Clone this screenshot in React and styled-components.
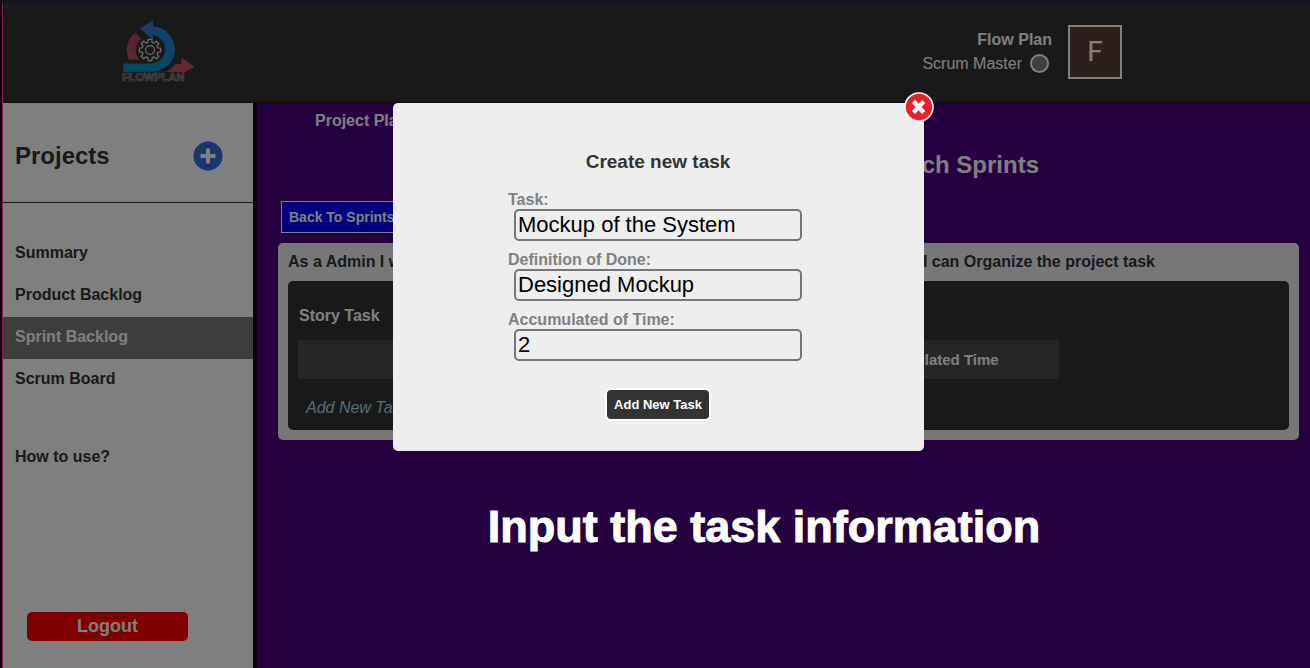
import React from "react";
import styled, { createGlobalStyle, css } from "styled-components";

const GlobalStyle = createGlobalStyle`
  *, *::before, *::after { box-sizing: border-box; }
  body {
    margin: 0;
    background: #14141f;
    font-family: "Liberation Sans", Arial, sans-serif;
    font-size: 16px;
    line-height: 20px;
    color: #333;
  }
  h1, h2, h3, p, ul { margin: 0; padding: 0; }
  button, input { font-family: inherit; }
`;

const Shell = styled.div`
  display: flex;
  min-height: 100vh;
  border-top: 3px solid #14141f;
  border-left: 2px solid #08080f;
`;

const Page = styled.div`
  position: relative;
  flex: 1;
  display: flex;
  flex-direction: column;
  border-left: 1px solid #8c1f50;
  background: #4b0082;
`;

const Header = styled.header`
  display: flex;
  justify-content: space-between;
  align-items: center;
  height: 100px;
  padding: 0 188px 2px 118px;
  background: #333;
  border-bottom: 1px solid #181818;
`;

const Account = styled.div`
  display: flex;
  align-items: center;
  gap: 16px;
  color: #fff;
`;

const AccountText = styled.div`
  display: flex;
  flex-direction: column;
  align-items: flex-end;
  gap: 4px;
`;

const AccountName = styled.strong`
  font-weight: 700;
`;

const Role = styled.span`
  display: flex;
  align-items: center;
  gap: 8px;
  padding-right: 3px;
`;

const StatusDot = styled.span`
  width: 19px;
  height: 19px;
  border: 2px solid #fff;
  border-radius: 50%;
  background: #808080;
`;

const Avatar = styled.div`
  display: grid;
  place-items: center;
  width: 54px;
  height: 54px;
  border: 2px solid #fff;
  background: #5d4037;
  font-size: 28px;
  line-height: 32px;
  font-family: Roboto, "Liberation Sans", sans-serif;
`;

const Body = styled.div`
  flex: 1;
  display: flex;
`;

const Sidebar = styled.aside`
  display: flex;
  flex-direction: column;
  flex: 0 0 254px;
  border-right: 4px solid #16001f;
  background: #fff;
`;

const SidebarHead = styled.div`
  display: flex;
  align-items: center;
  justify-content: space-between;
  height: 100px;
  padding: 6px 30px 0 12px;
  border-bottom: 1px solid #333;
`;

const SidebarTitle = styled.h2`
  font-size: 24px;
  line-height: 28px;
`;

const AddProject = styled.button`
  display: block;
  width: 30px;
  height: 30px;
  padding: 0;
  border: 0;
  background: none;
`;

const NavList = styled.ul`
  list-style: none;
  padding-top: 30px;
`;

const NavLink = styled.a`
  display: flex;
  align-items: center;
  height: 42px;
  padding: 0 12px 2px;
  font-weight: 700;
  text-decoration: none;
  color: #333;
  ${({ $active }) => $active && css`
    background: #7a7a7a;
    color: #fff;
  `}
  ${({ $spaced }) => $spaced && css`
    margin-top: 36px;
  `}
`;

const Logout = styled.button`
  width: 161px;
  height: 29px;
  margin: auto 0 27px 24px;
  padding: 0;
  border: 0;
  border-radius: 5px;
  background: #f00;
  color: #fff;
  font-size: 18px;
  font-weight: 700;
`;

const Main = styled.main`
  flex: 1;
  min-width: 0;
  padding: 8px 11px 0 21px;
`;

const Crumb = styled.a`
  display: block;
  margin-left: 37px;
  color: #fff;
  font-weight: 700;
  text-decoration: none;
`;

const MainTitle = styled.h1`
  padding: 19px 260px 21px 0;
  color: #fff;
  font-size: 24px;
  line-height: 30px;
  text-align: right;
`;

const BackButton = styled.button`
  display: block;
  height: 32px;
  margin: 0 0 10px 3px;
  padding: 0 7px;
  border: 1px solid #fff;
  background: #00f;
  color: #fff;
  font-size: 14px;
  font-weight: 700;
`;

const StoryCard = styled.section`
  padding: 9px 10px 10px;
  border-radius: 5px;
  background: #eee;
`;

const StoryTitle = styled.h3`
  display: flex;
  justify-content: space-between;
  padding: 0 134px 9px 0;
  font-size: 16px;
  line-height: 20px;
`;

const TaskPanel = styled.div`
  height: 149px;
  padding: 25px 10px 0;
  border-radius: 5px;
  background: #333;
  color: #fff;
`;

const PanelTitle = styled.h3`
  padding: 0 0 14px 1px;
  font-size: 16px;
  line-height: 20px;
`;

const TaskTable = styled.table`
  width: 761px;
  height: 39px;
  table-layout: fixed;
  border-collapse: collapse;
  background: #4d4d4d;
  font-size: 15px;
`;

const AddLink = styled.a`
  display: inline-block;
  margin: 19px 0 0 8px;
  color: #add8e6;
  font-style: italic;
  text-decoration: none;
`;

const Overlay = styled.div`
  position: absolute;
  inset: 0;
  display: flex;
  flex-direction: column;
  align-items: center;
  padding: 100px 0 0 3px;
  background: rgba(0, 0, 0, 0.5);
`;

const Modal = styled.form`
  position: relative;
  display: flex;
  flex-direction: column;
  align-items: center;
  width: 531px;
  padding: 48px 0 30px;
  border-radius: 5px;
  background: #eee;
`;

const CloseButton = styled.button`
  position: absolute;
  top: -11px;
  right: -10px;
  width: 30px;
  height: 30px;
  padding: 0;
  border: 0;
  background: none;
`;

const ModalTitle = styled.h2`
  padding-bottom: 17px;
  font-size: 19px;
  line-height: 22px;
`;

const Fields = styled.div`
  display: flex;
  flex-direction: column;
  gap: 9px;
  width: 300px;
`;

const Field = styled.div`
  display: flex;
  flex-direction: column;
`;

const Label = styled.label`
  color: #808080;
  font-weight: 700;
  line-height: 19px;
`;

const TextInput = styled.input`
  height: 32px;
  margin: 0 6px;
  padding: 0 2px;
  border: 2px solid #767676;
  border-radius: 5px;
  background: transparent;
  color: #000;
  font-size: 22px;
`;

const SubmitButton = styled.button`
  height: 33px;
  margin-top: 27px;
  padding: 0 7px;
  border: 2px solid #fff;
  border-radius: 6px;
  background: #333;
  color: #fff;
  font-size: 13px;
  font-weight: 700;
`;

const Caption = styled.p`
  margin-top: 50px;
  padding-left: 212px;
  color: #fff;
  font-size: 45px;
  font-weight: 700;
  line-height: 52px;
  -webkit-text-stroke: 1px #fff;
  stroke-linejoin: round;
`;

const gearPath = (() => {
  const teeth = 8;
  const step = (Math.PI * 2) / teeth;
  const points = [];
  for (let i = 0; i < teeth; i += 1) {
    const a = i * step;
    [[-0.27, 8], [-0.17, 10.8], [0.17, 10.8], [0.27, 8]].forEach(([d, r]) => {
      points.push(`${(29 + r * Math.cos(a + d)).toFixed(2)} ${(31 + r * Math.sin(a + d)).toFixed(2)}`);
    });
  }
  return `M${points.join("L")}Z`;
})();

function Logo() {
  return (
    <svg width="76" height="66" viewBox="0 0 76 66" role="img" aria-label="FlowPlan">
      <defs>
        <linearGradient id="flow" x1="0" y1="0" x2="0" y2="1">
          <stop offset="0" stopColor="#3478dc" />
          <stop offset="1" stopColor="#0892c4" />
        </linearGradient>
        <linearGradient id="arc" x1="1" y1="0" x2="0" y2="1">
          <stop offset="0" stopColor="#a44070" />
          <stop offset="1" stopColor="#c05460" />
        </linearGradient>
      </defs>
      <path d="M14 13.5A23 23 0 0 0 8 40.5H18A14.5 14.5 0 0 1 20.5 19.5Z" fill="url(#arc)" />
      <path d="M44 53Q51 50 54 45H60.5V38.5L73.5 48L61 54.5V53Z" fill="#c4545a" />
      <path
        d="M32 1L19 9.5L32 20.5V16.2A14.2 14.2 0 0 1 44.2 30.3A14.2 14.2 0 0 1 30 44.5H2.3V52.8H30A24 22.6 0 0 0 54 30.2A23.4 23.4 0 0 0 32 7.5Z"
        fill="url(#flow)"
      />
      <path d={gearPath} fill="none" stroke="#d8d8d8" strokeWidth="1.3" strokeLinejoin="round" />
      <circle cx="29" cy="31" r="4.4" fill="none" stroke="#d8d8d8" strokeWidth="1.3" />
      <text
        x="1"
        y="62"
        fontFamily="Liberation Sans, Arial, sans-serif"
        fontSize="11"
        fontWeight="700"
        fill="#333"
        stroke="#a0a0a0"
        strokeWidth="0.7"
      >
        FLOWPLAN
      </text>
    </svg>
  );
}

function PlusIcon() {
  return (
    <svg width="30" height="30" viewBox="0 0 30 30" aria-hidden="true">
      <circle cx="15" cy="15" r="14.5" fill="#2c6ee0" />
      <path d="M15 7.5V22.5M7.5 15H22.5" stroke="#fff" strokeWidth="4" />
    </svg>
  );
}

function CloseIcon() {
  return (
    <svg width="30" height="30" viewBox="0 0 30 30" aria-hidden="true">
      <circle cx="15" cy="15" r="14" fill="#ee1f28" stroke="#fff" strokeWidth="1.6" />
      <path d="M9.4 9.4L19.6 20.6M19.6 9.4L9.4 20.6" stroke="#fff" strokeWidth="4.4" />
    </svg>
  );
}

const links = [
  { text: "Summary" },
  { text: "Product Backlog" },
  { text: "Sprint Backlog", active: true },
  { text: "Scrum Board" },
  { text: "How to use?", spaced: true },
];

const fields = [
  { id: "task", label: "Task:", value: "Mockup of the System" },
  { id: "done", label: "Definition of Done:", value: "Designed Mockup" },
  { id: "time", label: "Accumulated of Time:", value: "2" },
];

export default function App() {
  return (
    <>
      <GlobalStyle />
      <Shell>
        <Page>
          <Header>
            <Logo />
            <Account>
              <AccountText>
                <AccountName>Flow Plan</AccountName>
                <Role>
                  Scrum Master
                  <StatusDot />
                </Role>
              </AccountText>
              <Avatar>F</Avatar>
            </Account>
          </Header>
          <Body>
            <Sidebar>
              <SidebarHead>
                <SidebarTitle>Projects</SidebarTitle>
                <AddProject type="button" aria-label="Add project">
                  <PlusIcon />
                </AddProject>
              </SidebarHead>
              <nav>
                <NavList>
                  {links.map((link) => (
                    <li key={link.text}>
                      <NavLink href="#" $active={link.active} $spaced={link.spaced}>
                        {link.text}
                      </NavLink>
                    </li>
                  ))}
                </NavList>
              </nav>
              <Logout type="button">Logout</Logout>
            </Sidebar>
            <Main>
              <Crumb href="#">Project Plan</Crumb>
              <MainTitle>Each Sprints</MainTitle>
              <BackButton type="button">Back To Sprints</BackButton>
              <StoryCard>
                <StoryTitle>
                  <span>As a Admin I want</span>
                  <span>so that I can Organize the project task</span>
                </StoryTitle>
                <TaskPanel>
                  <PanelTitle>Story Task</PanelTitle>
                  <TaskTable>
                    <thead>
                      <tr>
                        <th scope="col">Task</th>
                        <th scope="col">Definition of Done</th>
                        <th scope="col">Accumulated Time</th>
                      </tr>
                    </thead>
                  </TaskTable>
                  <AddLink href="#">Add New Task</AddLink>
                </TaskPanel>
              </StoryCard>
            </Main>
          </Body>
          <Overlay>
            <Modal role="dialog" aria-labelledby="modal-title">
              <CloseButton type="button" aria-label="Close">
                <CloseIcon />
              </CloseButton>
              <ModalTitle id="modal-title">Create new task</ModalTitle>
              <Fields>
                {fields.map((field) => (
                  <Field key={field.id}>
                    <Label htmlFor={field.id}>{field.label}</Label>
                    <TextInput id={field.id} type="text" defaultValue={field.value} />
                  </Field>
                ))}
              </Fields>
              <SubmitButton type="button">Add New Task</SubmitButton>
            </Modal>
            <Caption>Input the task information</Caption>
          </Overlay>
        </Page>
      </Shell>
    </>
  );
}
